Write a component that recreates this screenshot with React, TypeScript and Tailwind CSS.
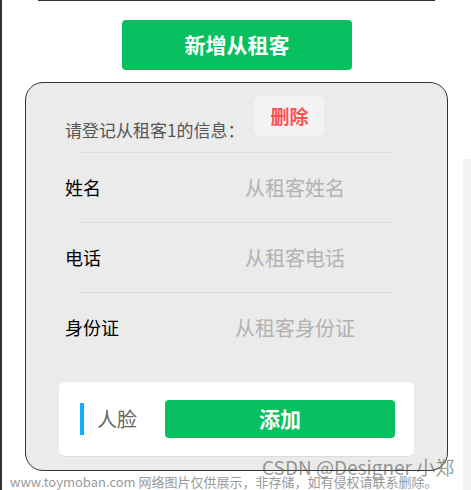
import React from "react";

const rows = [
  { label: "姓名", placeholder: "从租客姓名" },
  { label: "电话", placeholder: "从租客电话" },
  { label: "身份证", placeholder: "从租客身份证" },
];

export default function App() {
  return (
    <div className="relative flex h-[490px] w-[471px] overflow-hidden bg-white font-['Noto_Sans_CJK_SC',sans-serif]">
      <div className="flex w-[461px] flex-col border-l-2 border-[#333]">
        {/* bottom edge of previous card */}
        <div className="ml-[36px] h-px w-[397px] bg-[#333]" />

        <button
          type="button"
          className="ml-[120px] mt-[19px] h-[50px] w-[230px] rounded bg-[#07c160] text-[21px] font-bold text-white"
        >
          新增从租客
        </button>

        <div className="ml-[23px] mt-[12px] h-[389px] w-[423px] rounded-[18px] border border-[#333] bg-[#ebebeb]">
          <div className="flex h-[53px] items-start pl-[39px] pt-[13px]">
            <span className="mt-[23px] text-[17px] leading-[22px] text-[#555]">请登记从租客1的信息：</span>
            <button
              type="button"
              className="ml-[10px] h-[40px] w-[70px] rounded-md bg-[#f3f3f3] text-[19px] font-bold text-[#fa5151]"
            >
              删除
            </button>
          </div>

          <div className="ml-[53px] mt-[16px] h-px w-[315px] bg-[#dcdcdc]" />

          {rows.map((row, i) => (
            <div key={row.label}>
              <div className="flex h-[69px] items-center pl-[39px]">
                <span className="w-[115px] text-[18px] text-black">{row.label}</span>
                <input
                  readOnly
                  placeholder={row.placeholder}
                  className="w-[230px] bg-transparent text-center text-[20px] outline-none placeholder:text-[#b2b2b2]"
                />
              </div>
              {i < rows.length - 1 && <div className="ml-[53px] h-px w-[315px] bg-[#dcdcdc]" />}
            </div>
          ))}

          <div className="ml-[33px] mt-[20px] flex h-[75px] w-[355px] items-center rounded-md border-b border-[#dcdcdc] bg-white pl-[21px]">
            <div className="h-[32px] w-[4px] bg-[#10aeff]" />
            <span className="ml-[13px] text-[20px] text-[#666]">人脸</span>
            <button
              type="button"
              className="ml-auto mr-[19px] h-[38px] w-[230px] rounded bg-[#07c160] text-[21px] font-bold text-white"
            >
              添加
            </button>
          </div>
        </div>
      </div>

      <div className="flex w-[10px] flex-col pl-[2px] pt-[159px]">
        <div className="flex-1 bg-[#f3f3f3]" />
      </div>

      {/* watermarks */}
      <span className="absolute left-[262px] top-[455px] text-[19px] leading-[24px] text-[#555]/60">CSDN @Designer 小郑</span>
      <span className="absolute left-[10px] top-[474px] whitespace-nowrap text-[13px] leading-[16px] text-[#9a9a9a]">
        www.toymoban.com 网络图片仅供展示，非存储，如有侵权请联系删除。
      </span>
    </div>
  );
}
